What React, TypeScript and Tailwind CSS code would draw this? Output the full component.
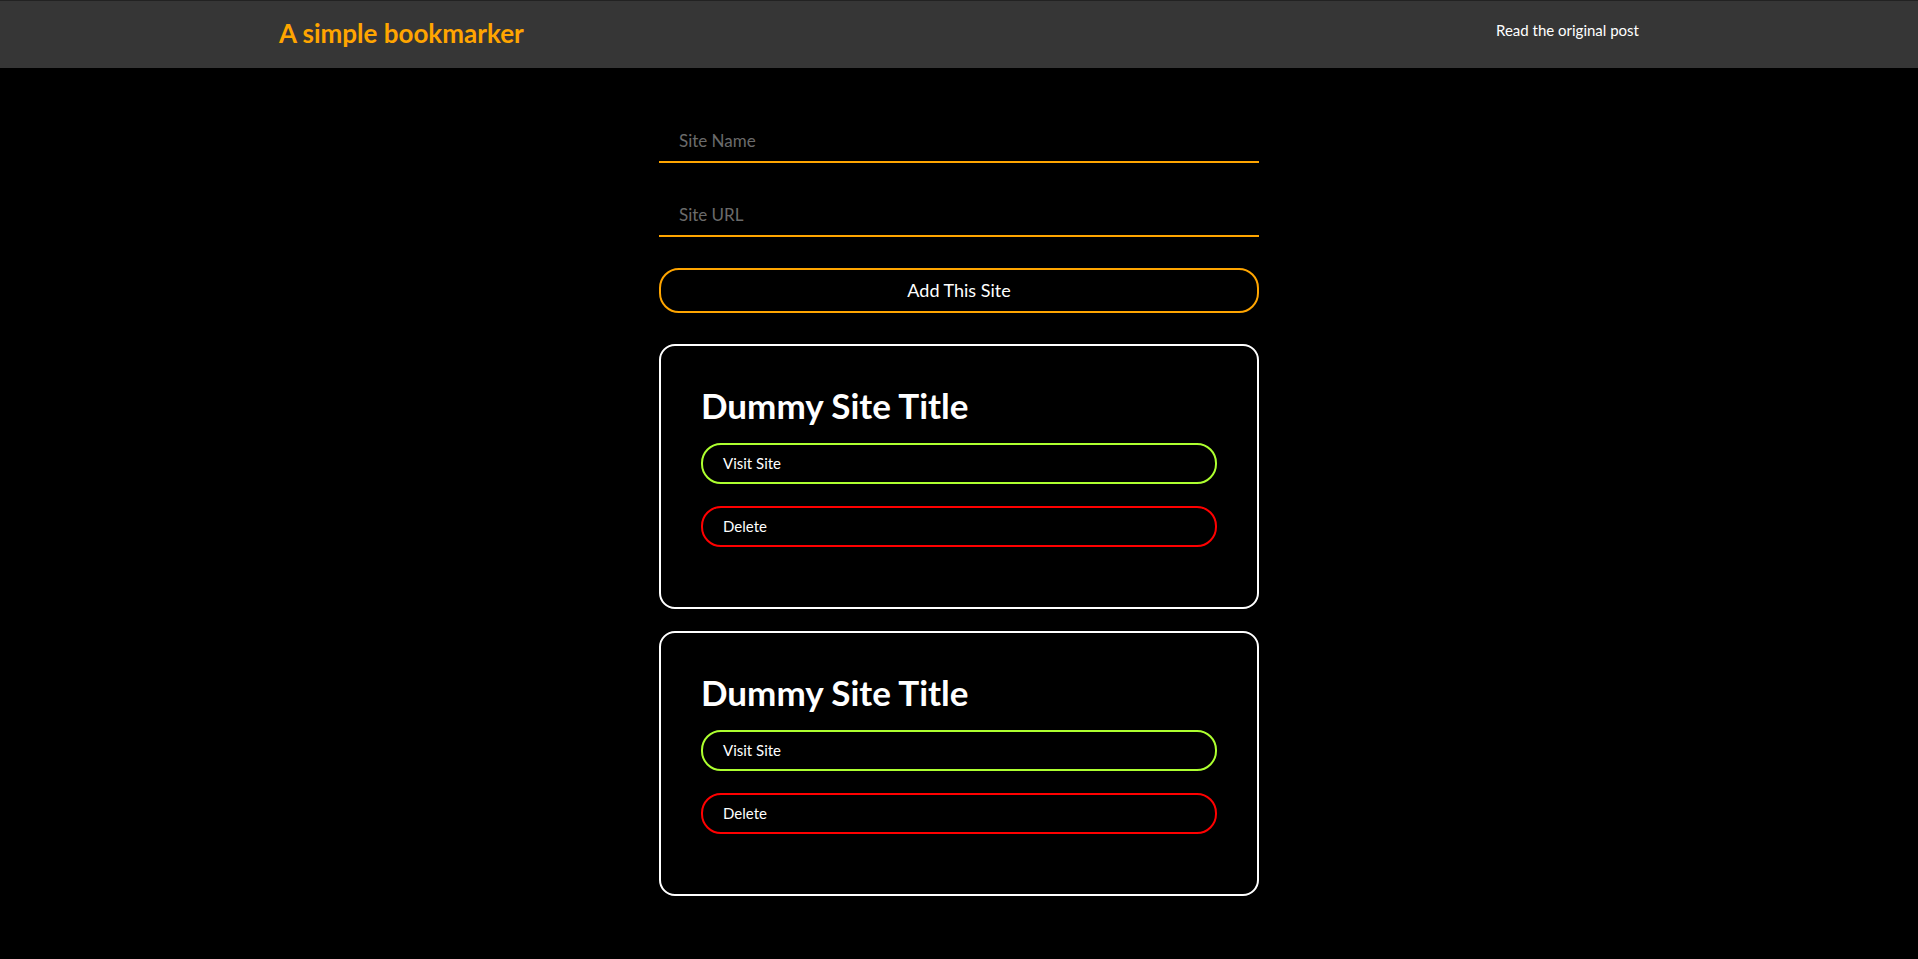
const sites = [
  { id: 1, title: 'Dummy Site Title' },
  { id: 2, title: 'Dummy Site Title' },
];

function SiteCard({ title }: { title: string }) {
  return (
    <div className="rounded-[16px] border-2 border-white px-10 pt-10 pb-[60px]">
      <h2 className="text-[35px] leading-[38px] font-bold text-white">{title}</h2>
      <button className="mt-[19px] flex h-[41px] w-full items-center rounded-[20px] border-2 border-[#adff2f] pl-5 text-left text-[15px] text-white">
        Visit Site
      </button>
      <button className="mt-[22px] flex h-[41px] w-full items-center rounded-[20px] border-2 border-[#ff0000] pl-5 text-left text-[15px] text-white">
        Delete
      </button>
    </div>
  );
}

export default function App() {
  return (
    <div className="min-h-screen bg-black font-['Lato',sans-serif]">
      <header className="h-[68px] w-full border-t border-[#222222] bg-[#363636]">
        <div className="mx-auto flex w-[1360px] items-start justify-between">
          <h1 className="mt-[17px] text-[26px] leading-[30px] font-bold text-[#ffa500]">
            A simple bookmarker
          </h1>
          <a href="#" className="mt-[20px] text-[15px] leading-[18px] text-white">
            Read the original post
          </a>
        </div>
      </header>

      <main className="mx-auto w-[600px] pt-[51px] pb-16">
        <form onSubmit={(e) => e.preventDefault()}>
          <input
            type="text"
            placeholder="Site Name"
            className="block h-[44px] w-full border-b-2 border-[#ffa500] bg-transparent pl-5 text-[17px] text-white outline-none placeholder:text-[#6b6b6b]"
          />
          <input
            type="text"
            placeholder="Site URL"
            className="mt-[30px] block h-[44px] w-full border-b-2 border-[#ffa500] bg-transparent pl-5 text-[17px] text-white outline-none placeholder:text-[#6b6b6b]"
          />
          <button
            type="submit"
            className="mt-[31px] block h-[45px] w-full rounded-[20px] border-2 border-[#ffa500] text-[18px] text-white"
          >
            Add This Site
          </button>
        </form>

        <div className="mt-[31px] flex flex-col gap-[22px]">
          {sites.map((s) => (
            <SiteCard key={s.id} title={s.title} />
          ))}
        </div>
      </main>
    </div>
  );
}
